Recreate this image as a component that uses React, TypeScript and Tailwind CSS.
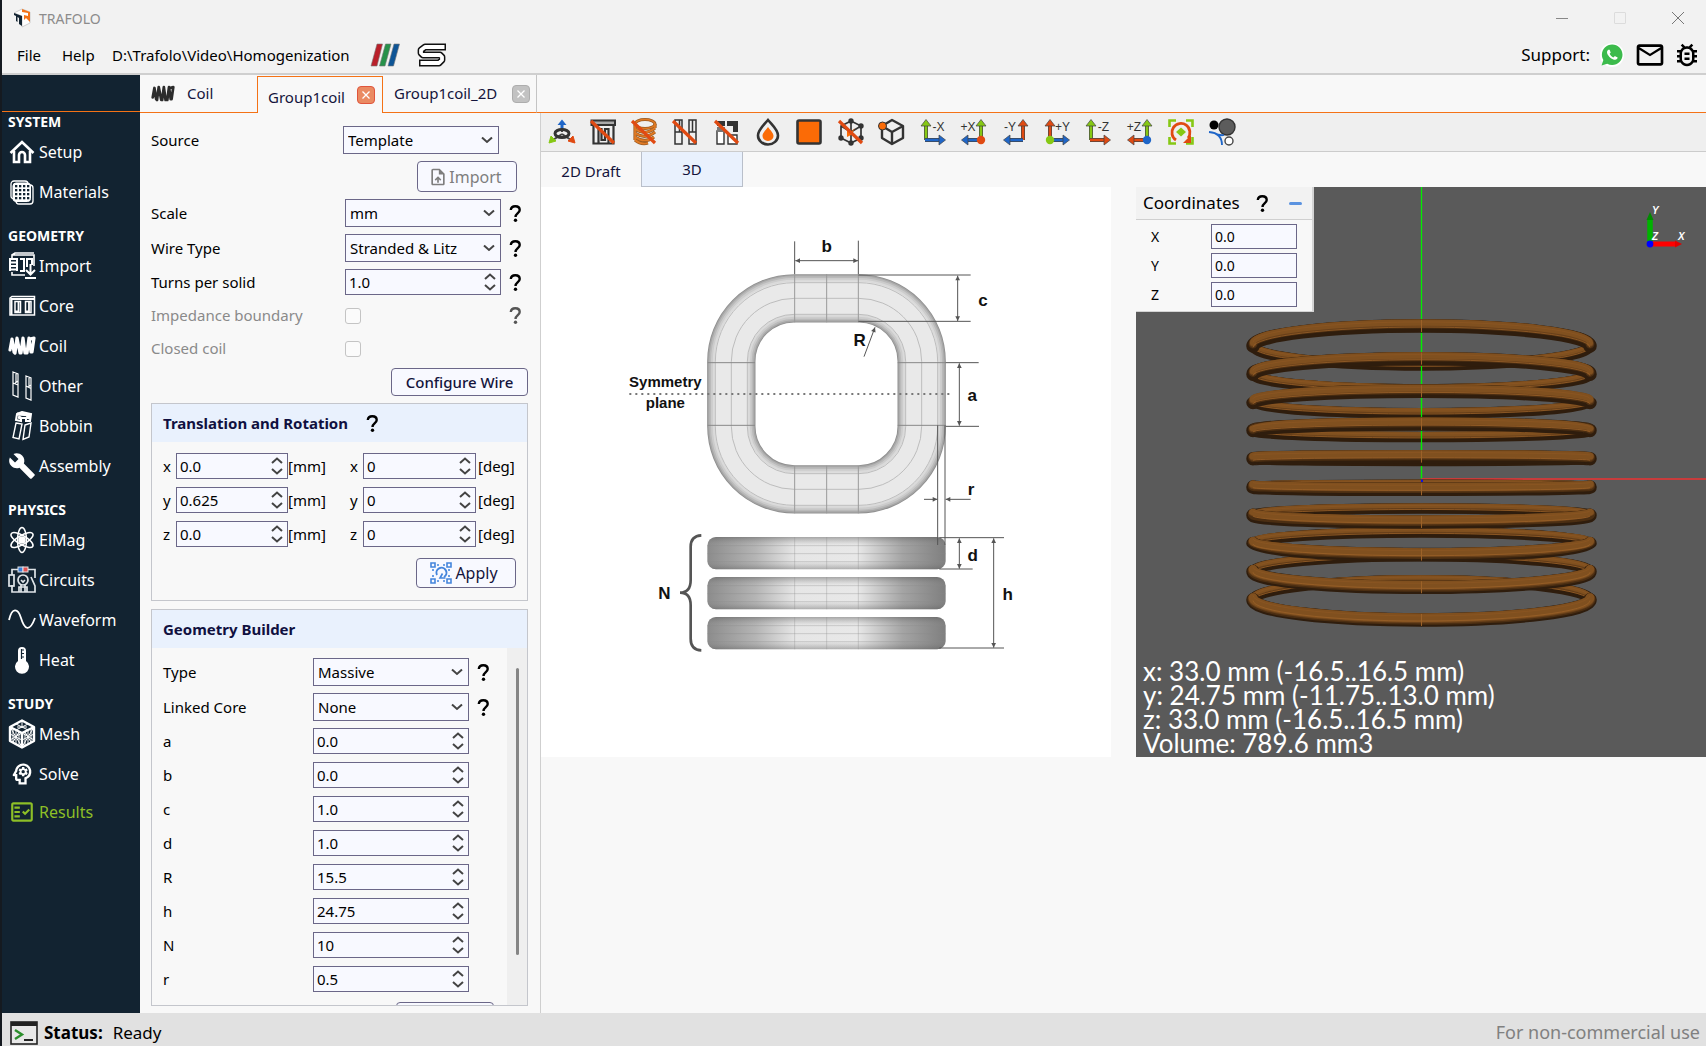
import React from "react";
import {
  MdBuild,
  MdMailOutline,
  MdOutlineBugReport,
  MdOutlineFactCheck,
  MdOutlinePsychology,
  MdOutlineUploadFile,
} from "react-icons/md";
import { IoLogoWhatsapp } from "react-icons/io";

/* ---------- small shared pieces ---------- */

const Chevron = ({ up = false }: { up?: boolean }) => (
  <svg viewBox="0 0 12 7" className="h-[7px] w-3" fill="none" stroke="#444" strokeWidth="2">
    <path d={up ? "M1 6 L6 1.5 L11 6" : "M1 1 L6 5.5 L11 1"} />
  </svg>
);

function Help({ dim = false }: { dim?: boolean }) {
  return (
    <button type="button" aria-label="Help" className={dim ? "flex text-[#555]" : "flex text-black"}>
      <svg viewBox="0 0 21 21" className="size-[21px]" fill="none" stroke="currentColor" strokeWidth="2.4">
        <path d="M5.800 7 C6 4.600 7.800 3.300 10.300 3.300 C13 3.300 14.700 4.900 14.700 7 C14.700 10 10.500 10.200 10.500 14" />
        <circle cx="10.500" cy="17.300" r="1.700" fill="currentColor" stroke="none" />
      </svg>
    </button>
  );
}

function Select({ id, value }: { id: string; value: string }) {
  return (
    <div className="relative h-7 w-[156px] shrink-0">
      <select
        id={id}
        defaultValue={value}
        className="h-full w-full appearance-none border border-[#6b6788] bg-[#f8f9ff] pl-1 text-[15px] text-black outline-none"
      >
        <option>{value}</option>
      </select>
      <span className="pointer-events-none absolute top-1/2 right-[6px] -translate-y-1/2">
        <Chevron />
      </span>
    </div>
  );
}

function Spin({ id, value, className }: { id: string; value: string; className: string }) {
  return (
    <div className={`flex h-[26px] shrink-0 items-center border border-[#6b6788] bg-[#f8f9ff] pr-1 pl-[3px] ${className}`}>
      <input id={id} defaultValue={value} className="w-0 min-w-0 flex-1 bg-transparent text-[15px] text-black outline-none" />
      <span className="flex flex-col gap-1">
        <button type="button" aria-label="Increase"><Chevron up /></button>
        <button type="button" aria-label="Decrease"><Chevron /></button>
      </span>
    </div>
  );
}

/* ---------- sidebar icons ---------- */

const CoilIcon = ({ className }: { className: string }) => (
  <svg viewBox="0 0 28 20" className={className} fill="none" stroke="currentColor" strokeWidth="3.2" strokeLinejoin="round" strokeLinecap="round">
    <path d="M2 14 L4 3 L6 16 L7 17 L9 2 L12 17 L13 17 L15 2 L17 17 L19 17 L21 2 L23 16 L24 16 L26 2 L22 3" />
  </svg>
);

const HomeIcon = () => (
  <svg viewBox="0 0 26 26" className="size-[26px]" fill="none" stroke="#fff" strokeWidth="2.6">
    <path d="M1.5 14 L13 3 L24.5 14" />
    <path d="M5 12 V23 H10 V16 a3 3 0 0 1 6 0 V23 H21 V12" />
  </svg>
);
const MaterialsIcon = () => (
  <svg viewBox="0 0 26 26" className="size-[26px]" fill="none" stroke="#fff">
    <rect x="2" y="2" width="17" height="18" rx="3" strokeWidth="1.3" />
    <rect x="7" y="6" width="17" height="19" rx="3" strokeWidth="1.3" />
    <rect x="4" y="4" width="17.500" height="18.500" rx="3" fill="#fff" />
    <g fill="#122331" stroke="none">
      {[6, 10, 14, 18].map((y) => [6, 10, 14, 18].map((x) => <rect key={`${x}-${y}`} x={x} y={y} width="2.300" height="2.300" />))}
    </g>
  </svg>
);
const ImportIcon = () => (
  <svg viewBox="0 0 28 28" className="size-7" fill="none" stroke="#fff" strokeWidth="1.6">
    <path d="M4 6 V3 L26 3 V14 M4 20 V23 H17 M4 3 L7 1 H26" />
    <path d="M1 7 H10 M1 10.500 H10 M1 14 H10 M1 17.500 H10 M2 6 V19 M9 6 V19" strokeWidth="2" />
    <path d="M12 7 H16 V19 H12 M19 15 V7 H24 V13" strokeWidth="2" />
    <path d="M22.500 12 V22 M18 18 L22.500 22.500 L27 18 M17 26 H28" strokeWidth="2" />
  </svg>
);
const CoreIcon = () => (
  <svg viewBox="0 0 28 22" className="h-[22px] w-7" fill="none" stroke="#fff" strokeWidth="1.5">
    <path d="M2 20 V3 L4 1.500 H26.500 V20 Z" />
    <path d="M3.500 20 V4 H26" strokeWidth="2" />
    <path d="M7 6.500 H12.500 V17.500 H7 Z M17.500 6.500 H23 V17.500 H17.500 Z" />
    <path d="M7 16.500 H10.500 V7 M17.500 16.500 H21 V7" strokeWidth="1.800" />
  </svg>
);
const OtherIcon = () => (
  <svg viewBox="0 0 28 30" className="h-[30px] w-7" fill="none" stroke="#fff" strokeWidth="1.2">
    <path d="M5 1 L10 3 V26 L5 24 Z M5 12 L10 14 M8 3 V12 M7 12 L10 10" />
    <path d="M18 5 L23 7 V29 L18 27 Z M18 15 L23 17.500 M21 7 V16 M20 16 L23 14" />
  </svg>
);
const BobbinIcon = () => (
  <svg viewBox="0 0 28 30" className="h-[30px] w-7" fill="none" stroke="#fff" strokeWidth="1.4">
    <path d="M8 12 L14 13 L11 28 L5 26.500 Z M17 14 L23 12 L21 26 L15 28.500 Z" />
    <path d="M9 3 L14 1 L23 3 L22 10 L18 10 V7 H13 V10 L8 9 Z" strokeWidth="2" />
    <path d="M9 3 L23 4 M10 6 L13 7 M18 6 L22 7" strokeWidth="3" />
  </svg>
);
const AtomIcon = () => (
  <svg viewBox="0 0 28 28" className="size-7" fill="none" stroke="#fff" strokeWidth="1.5">
    {[0, 60, 120].map((a) => <ellipse key={a} cx="14" cy="14" rx="4.500" ry="12.500" transform={`rotate(${a} 14 14)`} />)}
    <circle cx="14" cy="14" r="3" fill="#fff" />
  </svg>
);
const CircuitIcon = () => (
  <svg viewBox="0 0 28 28" className="size-7" fill="none" stroke="#dfe4e8" strokeWidth="1.7">
    <path d="M11 3.500 H4 V9 M4 19 V26 H27 V20 L23 11 M27 12 V3.500 H20" />
    <rect x="1" y="9" width="5" height="11" />
    <circle cx="15" cy="14" r="5" />
    <path d="M13 18 V26 M17 18 V26 M13 14 L15 16 L17 14 M11 26 V21 H19 V26" />
    <rect x="10" y="1" width="5" height="5" fill="#3d7fd6" strokeWidth="1" />
    <rect x="15" y="1" width="5" height="5" fill="#e25252" strokeWidth="1" />
  </svg>
);
const WaveIcon = () => (
  <svg viewBox="0 0 28 24" className="h-6 w-7" fill="none" stroke="#fff" strokeWidth="1.8">
    <path d="M1 12 C4 -1 10 0 13 10 S21 26 27 10" />
  </svg>
);
const HeatIcon = () => (
  <svg viewBox="0 0 28 28" className="size-7" fill="#fff">
    <path d="M10 5 a4 4 0 0 1 8 0 V15 a7 7 0 1 1 -8 0 Z" />
    <path d="M14 4 H16 M14 7.500 H16 M14 11 H16 M13.500 3 V13" stroke="#122331" strokeWidth="1.2" />
  </svg>
);
const MeshIcon = () => (
  <svg viewBox="0 0 28 30" className="h-[30px] w-7" fill="none" stroke="#fff" strokeWidth="2.4" strokeLinejoin="round">
    <path d="M14 1.500 L26 8 V22 L14 28.500 L2 22 V8 Z M2 8 L14 14 L26 8 M14 14 V28.500" />
    <path d="M8 5 L20 11 M20 5 L8 11 M14 2 V9 M9 8 H19 M2 15 L14 21 M8 11 V25 M2 8 L14 28 M2 21 L14 14 M5 10 L5 23 L11 13 V26 M26 15 L14 21 M20 11 V25 M26 8 L14 28 M26 21 L14 14 M23 10 V23 L17 13 V26" strokeWidth="1" />
  </svg>
);

type Item = { label: string; icon: React.ReactNode; active?: boolean };
const nav: { title: string; items: Item[] }[] = [
  { title: "SYSTEM", items: [{ label: "Setup", icon: <HomeIcon /> }, { label: "Materials", icon: <MaterialsIcon /> }] },
  {
    title: "GEOMETRY",
    items: [
      { label: "Import", icon: <ImportIcon /> },
      { label: "Core", icon: <CoreIcon /> },
      { label: "Coil", icon: <CoilIcon className="h-5 w-7" /> },
      { label: "Other", icon: <OtherIcon /> },
      { label: "Bobbin", icon: <BobbinIcon /> },
      { label: "Assembly", icon: <MdBuild className="size-7" /> },
    ],
  },
  {
    title: "PHYSICS",
    items: [
      { label: "ElMag", icon: <AtomIcon /> },
      { label: "Circuits", icon: <CircuitIcon /> },
      { label: "Waveform", icon: <WaveIcon /> },
      { label: "Heat", icon: <HeatIcon /> },
    ],
  },
  {
    title: "STUDY",
    items: [
      { label: "Mesh", icon: <MeshIcon /> },
      { label: "Solve", icon: <MdOutlinePsychology className="size-[30px]" /> },
      { label: "Results", icon: <MdOutlineFactCheck className="size-[26px]" />, active: true },
    ],
  },
];

function Sidebar() {
  return (
    <nav className="w-[138px] shrink-0 bg-[#122331] text-white">
      <div className="h-[37px] border-b border-[#f47216]" />
      <div className="flex flex-col gap-[14px]">
        {nav.map((s) => (
          <section key={s.title}>
            <h2 className="h-5 pl-[6px] text-[14px] leading-5 font-bold">{s.title}</h2>
            {s.items.map((i) => (
              <a
                key={i.label}
                href="#"
                className={`flex items-center gap-[3px] pl-[6px] text-[16px] ${i.active ? "h-9 text-[#8dbf27]" : "h-10 text-white"}`}
              >
                <span className="flex w-7 justify-center">{i.icon}</span>
                {i.label}
              </a>
            ))}
          </section>
        ))}
      </div>
    </nav>
  );
}

/* ---------- header ---------- */

function Header() {
  return (
    <header className="border-b-2 border-[#cfcfcf] bg-[#f2f2f2]">
      <div className="flex h-9 items-center pl-[11px]">
        <svg viewBox="0 0 18 20" className="h-5 w-[18px]" fill="none">
          <path d="M1 5 L9 1 L17 4 V15 L9 19 V8 Z" fill="#fff" stroke="#bbb" strokeWidth="0.7" />
          <path d="M9 1 L17 4 V14 L15 12 L13 10 L11 12 V7 L15 8 V5 L9 4 Z" fill="#f47216" />
          <path d="M1 5 L9 8 V18 L6 16 V10 L4.500 9 V14 L3 13 V8 L1 7 Z" fill="#122331" />
        </svg>
        <h1 className="ml-2 text-[14px] text-[#8c8c8c]">TRAFOLO</h1>
        <div className="ml-auto flex items-center gap-[46px] pr-[22px]">
          <button type="button" aria-label="Minimize" className="flex h-3 w-3 items-center"><span className="h-px w-3 bg-[#888]" /></button>
          <button type="button" aria-label="Maximize" className="size-3 rounded-[1px] border border-[#dcdcdc]" />
          <button type="button" aria-label="Close">
            <svg viewBox="0 0 12 12" className="size-3" stroke="#777" strokeWidth="1"><path d="M0 0 L12 12 M12 0 L0 12" /></svg>
          </button>
        </div>
      </div>
      <div className="flex h-[37px] items-center pt-px pl-[15px] text-[15px] text-black">
        <button type="button" className="w-[45px] text-left">File</button>
        <button type="button" className="w-[50px] text-left">Help</button>
        <span>D:\Trafolo\Video\Homogenization</span>
        <svg viewBox="0 0 30 24" className="ml-5 h-6 w-[30px]">
          <path d="M7 1 H12.500 L7 23 H1 Z" fill="#b9202a" stroke="#777" strokeWidth="0.6" />
          <path d="M15.500 1 H21 L15 23 H9.500 Z" fill="#27914a" stroke="#777" strokeWidth="0.6" />
          <path d="M24 1 H29.500 L23.500 23 H18 Z" fill="#0e5596" stroke="#777" strokeWidth="0.6" />
        </svg>
        <svg viewBox="0 0 30 24" className="ml-[17px] h-6 w-[30px]" fill="none" strokeLinejoin="round">
          <path d="M29 4 H8 L4 7 V10 L6 12 H23 L25 14 V17 L22 20 H2" stroke="#111" strokeWidth="6.8" />
          <path d="M27.500 4 H8 L4 7 V10 L6 12 H23 L25 14 V17 L22 20 H3.500" stroke="#fff" strokeWidth="3.8" />
        </svg>
        <div className="ml-auto flex items-center pr-1">
          <span className="mr-[10px] text-[17px]">Support:</span>
          <a href="#" aria-label="WhatsApp" className="mr-[10px] rounded-full bg-white text-[#3cbb4c]"><IoLogoWhatsapp className="size-6" /></a>
          <a href="#" aria-label="E-mail" className="mr-[6px]"><MdMailOutline className="size-8" /></a>
          <a href="#" aria-label="Report a bug"><MdOutlineBugReport className="size-[30px]" /></a>
        </div>
      </div>
    </header>
  );
}

function CloseBox({ hot = false }: { hot?: boolean }) {
  return (
    <button
      type="button"
      aria-label="Close tab"
      className={`flex size-[18px] items-center justify-center rounded-sm border ${hot ? "border-[#e0553c] bg-[#ea8a62]" : "border-[#adadad] bg-[#c2c2c2]"}`}
    >
      <svg viewBox="0 0 8 8" className="size-2" stroke="#fff" strokeWidth="1.3"><path d="M0.500 0.500 L7.500 7.500 M7.500 0.500 L0.500 7.500" /></svg>
    </button>
  );
}

function TopTabs() {
  return (
    <div role="tablist" className="flex h-[38px] shrink-0 text-[15px] text-[#14143c]">
      <div role="tab" className="flex w-[117px] items-center gap-3 border-b border-[#f47216] pl-[11px]">
        <CoilIcon className="h-[18px] w-6 text-[#2c2c2c]" />
        Coil
      </div>
      <div role="tab" aria-selected="true" className="mt-px flex w-[126px] items-center justify-between border border-b-0 border-[#f47216] pr-[7px] pl-[10px]">
        <span className="pt-1">Group1coil</span>
        <CloseBox hot />
      </div>
      <div role="tab" className="flex w-[154px] items-center justify-between border-r border-b border-r-[#c4c4c4] border-b-[#f47216] pr-[6px] pl-[11px]">
        Group1coil_2D
        <CloseBox />
      </div>
      <div className="flex-1 border-b border-[#f47216]" />
    </div>
  );
}

/* ---------- left form ---------- */

function Row({ id, label, children }: { id: string; label: string; children: React.ReactNode }) {
  return (
    <div className="flex items-center text-black">
      <label htmlFor={id} className="flex-1">{label}</label>
      {children}
    </div>
  );
}

const builder = [["a", "0.0"], ["b", "0.0"], ["c", "1.0"], ["d", "1.0"], ["R", "15.5"], ["h", "24.75"], ["N", "10"], ["r", "0.5"]];
const moves = [["x", "0.0"], ["y", "0.625"], ["z", "0.0"]];

const ApplyIcon = () => (
  <svg viewBox="0 0 22 22" className="size-[22px]" fill="none" stroke="#4485dc" strokeWidth="1.6">
    <path d="M1 1 H5 V5 H1 Z M17 1 H21 V5 H17 Z M1 17 H5 V21 H1 Z M17 17 H21 V21 H17 Z" />
    <path d="M7 3 H9 M13 3 H15 M7 19 H9 M13 19 H15 M3 7 V9 M3 13 V15 M19 7 V9 M19 13 V15" />
    <path d="M7 13 A5 5 0 1 1 14 15" strokeWidth="2" />
    <path d="M15.500 16 H10 L12.500 11.500" strokeWidth="1.600" />
  </svg>
);

function FormPanel() {
  return (
    <div className="flex w-[401px] shrink-0 flex-col border-r border-[#cfcfcf] pt-[13px] pr-3 pb-[7px] pl-[11px] text-[15px]">
      <div className="flex flex-col pr-[2px]">
        <div className="pr-[27px]"><Row id="source" label="Source"><Select id="source" value="Template" /></Row></div>
        <div className="mt-[7px] flex justify-end pr-[9px]">
          <button type="button" disabled className="flex h-[31px] w-[100px] items-center justify-center rounded-[4px] border border-[#6b6788] bg-[#f8f9ff] pr-1 text-[16px] text-[#7e7e7e]">
            <MdOutlineUploadFile className="mr-px size-5" />Import
          </button>
        </div>
        <div className="mt-[7px] flex flex-col gap-[7px]">
          <Row id="scale" label="Scale"><Select id="scale" value="mm" /><span className="ml-1"><Help /></span></Row>
          <Row id="wire" label="Wire Type"><Select id="wire" value="Stranded & Litz" /><span className="ml-1"><Help /></span></Row>
          <Row id="turns" label="Turns per solid"><Spin id="turns" value="1.0" className="w-[156px]" /><span className="ml-1"><Help /></span></Row>
        </div>
        <div className="mt-1 flex flex-col text-[#8a8a8a]">
          <div className="flex h-[33px] items-center">
            <label htmlFor="imp" className="flex-1">Impedance boundary</label>
            <input id="imp" type="checkbox" disabled className="mr-[140px] size-4 appearance-none rounded-[3px] border border-[#c4c4c4] bg-[#fbfbfb]" />
            <span className="ml-1"><Help dim /></span>
          </div>
          <div className="flex h-[33px] items-center">
            <label htmlFor="closed" className="flex-1">Closed coil</label>
            <input id="closed" type="checkbox" disabled className="mr-[165px] size-4 appearance-none rounded-[3px] border border-[#c4c4c4] bg-[#fbfbfb]" />
          </div>
        </div>
      </div>
      <button type="button" className="mt-[3px] h-7 w-[137px] shrink-0 self-end rounded-[4px] border border-[#6b6788] bg-[#f8f9ff] text-[15px] font-medium text-[#14143c]">
        Configure Wire
      </button>

      <section className="mt-[7px] shrink-0 border border-[#c4c6cc]">
        <div className="flex h-[38px] items-center gap-[14px] bg-[#e9f1fd] px-[11px]">
          <h2 className="text-[15px] font-bold text-[#101040]">Translation and Rotation</h2>
          <Help />
        </div>
        <div className="flex flex-col gap-2 px-[11px] pt-[11px]">
          {moves.map(([k, v]) => (
            <div key={k} className="flex items-center">
              <label htmlFor={`t-${k}`} className="w-[13px]">{k}</label>
              <Spin id={`t-${k}`} value={v} className="w-[112px]" />
              <span className="w-[62px]">[mm]</span>
              <label htmlFor={`r-${k}`} className="w-[13px]">{k}</label>
              <Spin id={`r-${k}`} value="0" className="w-[113px]" />
              <span className="ml-[2px]">[deg]</span>
            </div>
          ))}
        </div>
        <div className="flex justify-end pt-[11px] pr-[11px] pb-3">
          <button type="button" className="flex h-[30px] w-[100px] items-center justify-center gap-[3px] rounded-[4px] border border-[#6b6788] bg-[#f8f9ff] pr-1 text-[16px] text-[#14143c]">
            <ApplyIcon />Apply
          </button>
        </div>
      </section>

      <section className="mt-2 flex min-h-0 flex-1 flex-col border border-[#c4c6cc]">
        <h2 className="h-[38px] shrink-0 bg-[#e9f1fd] px-[11px] text-[15px] leading-[39px] font-bold text-[#101040]">Geometry Builder</h2>
        <div className="flex min-h-0 flex-1">
          <div className="flex min-w-0 flex-1 flex-col gap-[7px] overflow-hidden pt-[10px] pr-[13px] pl-[11px]">
            <Row id="type" label="Type"><Select id="type" value="Massive" /><span className="ml-1"><Help /></span></Row>
            <Row id="linked" label="Linked Core"><Select id="linked" value="None" /><span className="ml-1"><Help /></span></Row>
            <div className="flex shrink-0 flex-col gap-2 pr-[25px]">
              {builder.map(([k, v]) => (
                <Row key={k} id={`g-${k}`} label={k}><Spin id={`g-${k}`} value={v} className="w-[156px]" /></Row>
              ))}
            </div>
            <button type="button" aria-label="Build" className="mt-[3px] h-7 w-[98px] shrink-0 self-end rounded-[4px] border border-[#6b6788] bg-[#f8f9ff]" />
          </div>
          <div className="flex w-5 shrink-0 justify-center bg-[#efefef] pt-5 pb-[50px]">
            <div className="w-[3px] rounded-full bg-[#858585]" />
          </div>
        </div>
      </section>
    </div>
  );
}

/* ---------- toolbar ---------- */

const G = "#86c814";
const B = "#1f66c8";
const R = "#e04a12";
const D = "#333333";

function Tool({ name, children }: { name: string; children: React.ReactNode }) {
  return (
    <button type="button" aria-label={name} className="flex">
      <svg viewBox="0 0 28 28" className="size-7" fill="none">{children}</svg>
    </button>
  );
}
const Slash = () => <path d="M2 3 L25 25" stroke={R} strokeWidth="3.2" />;

function AxisTool({ label, up, side, left = false, dot }: { label: string; up: string; side: string; left?: boolean; dot?: string }) {
  const x = left ? 21 : 7;
  return (
    <Tool name={`View ${label}`}>
      <path d={`M${x} 22 V6`} stroke="#444" strokeWidth="4" />
      <path d={`M${x} 22 V6`} stroke={up} strokeWidth="2.6" />
      <path d={`M${x - 5} 8 L${x} 1.500 L${x + 5} 8 Z`} fill={up} stroke="#444" strokeWidth="0.7" />
      <path d={left ? "M21 22 H5" : "M6 22 H22"} stroke="#444" strokeWidth="4" />
      <path d={left ? "M21 22 H5" : "M6 22 H22"} stroke={side} strokeWidth="2.6" />
      <path d={left ? "M8 17 L1.500 22 L8 27 Z" : "M20 17 L26.500 22 L20 27 Z"} fill={side} stroke="#444" strokeWidth="0.7" />
      {dot && <circle cx={x} cy="22" r="4.200" fill={dot} />}
      <text x={left ? 8 : 19.500} y="13" textAnchor="middle" fontSize="12" fontFamily="Liberation Sans, sans-serif" fill="#333">{label}</text>
    </Tool>
  );
}

function Toolbar() {
  return (
    <div className="h-[39px] border-b border-[#cccccc] bg-[#efefef]">
      <div className="flex h-full w-[702px] items-center justify-around">
        <Tool name="Origin">
          <path d="M14 14 V6 M14 16 L5 22 M14 16 L23 22" stroke="#444" strokeWidth="2" />
          <path d="M9.500 7 L14 1.500 L18.500 7 Z M12.500 6 H15.500 V11 H12.500 Z" fill={B} />
          <path d="M1 25 L3 18 L8 23 Z" fill={G} stroke={G} />
          <path d="M27 25 L25 18 L20 23 Z" fill={R} stroke={R} />
          <ellipse cx="14" cy="15.500" rx="7" ry="4" stroke={D} strokeWidth="3" />
        </Tool>
        <Tool name="Hide core">
          <path d="M2.500 2.500 H26 V7 H2.500 Z" stroke={D} strokeWidth="2" fill="#aaa" />
          <path d="M4.500 7 V25.500 H24.500 V7 M9.500 25 V11 H12.500 V22 H16 V11 H19.500 V25" stroke={D} strokeWidth="2.200" />
          <Slash />
        </Tool>
        <Tool name="Hide coil">
          <ellipse cx="15" cy="6" rx="10" ry="4.500" stroke="#9a5a22" strokeWidth="3" />
          <path d="M5 7 V22 M5 11 Q15 18 25 10 M5 15 Q15 22 25 14 M5 19 Q15 26 24 19 M5 22 Q11 27 18 25 M25 6 V10" stroke="#9a5a22" strokeWidth="3.200" />
          <ellipse cx="15" cy="6" rx="10" ry="4.500" stroke="#e07a24" strokeWidth="1.500" />
          <path d="M5 7 V22 M5 11 Q15 18 25 10 M5 15 Q15 22 25 14 M5 19 Q15 26 24 19 M5 22 Q11 27 18 25 M25 6 V10" stroke="#e07a24" strokeWidth="1.700" />
          <Slash />
        </Tool>
        <Tool name="Hide other">
          <path d="M4 2 H11 V26 H4 Z M4 14 H11 M8.500 2 V14 M18 2 H25 V26 H18 Z M18 14 H25 M21.500 2 V14" stroke={D} strokeWidth="1.500" />
          <Slash />
        </Tool>
        <Tool name="Hide bobbin">
          <path d="M4 3 H12 V8 H4 Z M14 3 H25 V14 H20 V8 H14 Z" fill={D} />
          <path d="M4 13 H11 V26 H4 Z M15 17 H24 V26 H15 Z" stroke={D} strokeWidth="1.400" fill="#fff" />
          <path d="M4 9 H12 V14 H4 Z" fill="#777" />
          <Slash />
        </Tool>
        <Tool name="Drop">
          <path d="M14 2 C9 8 4 12 4 17.500 A10 9 0 0 0 24 17.500 C24 12 19 8 14 2 Z" stroke={D} strokeWidth="2.600" />
          <path d="M14 9 C11 13 8.500 15 8.500 18 A5.500 5 0 0 0 19.500 18 C19.500 15 17 13 14 9 Z" fill="#fb6b06" />
        </Tool>
        <Tool name="Surface"><rect x="2.500" y="2.500" width="23" height="23" rx="1.500" fill="#fb6b06" stroke={D} strokeWidth="2.600" /></Tool>
        <Tool name="Hide nodes">
          <path d="M14 3 L24 8 V20 L14 25 L4 20 V8 Z M4 8 L14 14 L24 8 M14 3 V25" stroke={D} strokeWidth="1.700" />
          <g fill={D}><circle cx="14" cy="3" r="2.700" /><circle cx="24" cy="8" r="2.700" /><circle cx="24" cy="20" r="2.700" /><circle cx="14" cy="25" r="2.700" /><circle cx="4" cy="20" r="2.700" /></g>
          <path d="M10 10 L14 14 L18 10 L14 17 L10 19 Z" fill="#fb6b06" />
          <Slash />
        </Tool>
        <Tool name="Pick point">
          <path d="M14 2 L25 8 V20 L14 26 L4 20 V8 Z M4 8 L14 14 L25 8 M14 14 V26" stroke={D} strokeWidth="2.400" strokeLinejoin="round" />
          <circle cx="4.500" cy="8" r="4" fill="#fb6b06" stroke={D} />
        </Tool>
        <AxisTool label="-X" up={G} side={B} />
        <AxisTool label="+X" up={G} side={B} left dot={R} />
        <AxisTool label="-Y" up={R} side={B} left />
        <AxisTool label="+Y" up={R} side={B} dot={G} />
        <AxisTool label="-Z" up={G} side={R} />
        <AxisTool label="+Z" up={G} side={R} left dot={B} />
        <Tool name="Fit view">
          <path d="M9 2.500 H2.500 V9 M19 2.500 H25.500 V9 M9 25.500 H2.500 V19 M19 25.500 H25.500 V19" stroke={G} strokeWidth="2.600" />
          <path d="M9 22 A9 9 0 1 1 21 20" stroke={R} strokeWidth="2.800" />
          <path d="M24 17 V25 H16 Z" fill={R} />
          <path d="M14 9.500 L19 14 L14 18.500 L9 14 Z" fill={G} />
        </Tool>
        <Tool name="Contacts">
          <circle cx="6" cy="7" r="4.500" fill="#000" />
          <circle cx="19" cy="9" r="8" fill="#5c5c5c" stroke="#333" strokeWidth="1.400" />
          <circle cx="21" cy="23" r="4" fill="#fff" stroke="#444" strokeWidth="1.400" />
          <path d="M1 14 Q14 15 14 27 M6 15 Q12 18 16 17" stroke={B} strokeWidth="1.800" />
        </Tool>
      </div>
    </div>
  );
}

/* ---------- parametric drawing ---------- */

function CoilDrawing() {
  const body = { x: 394, y: 235, width: 571, height: 573, rx: 189, fill: "none" };
  const layers: [string, number][] = [["#8f8f8f", 145], ["#a6a6a6", 140], ["#bababa", 132], ["#cccccc", 122], ["#dadada", 111], ["#e9e9e9", 99]];
  return (
    <svg viewBox="-177 -99 1710 1710" className="block w-full" role="img" aria-label="Coil dimensions">
      <defs>
        <linearGradient id="bar" x1="0" x2="1">
          <stop offset="0" stopColor="#8c8c8c" />
          <stop offset="0.200" stopColor="#b4b4b4" />
          <stop offset="0.370" stopColor="#e6e6e6" />
          <stop offset="0.630" stopColor="#e8e8e8" />
          <stop offset="0.820" stopColor="#a4a4a4" />
          <stop offset="1" stopColor="#7f7f7f" />
        </linearGradient>
        <linearGradient id="edge" x1="0" x2="0" y1="0" y2="1">
          <stop offset="0" stopColor="#555" stopOpacity="0.450" />
          <stop offset="0.250" stopColor="#888" stopOpacity="0" />
          <stop offset="0.750" stopColor="#888" stopOpacity="0" />
          <stop offset="1" stopColor="#555" stopOpacity="0.400" />
        </linearGradient>
        <marker id="arr" viewBox="0 0 10 10" refX="10" refY="5" markerWidth="18" markerHeight="14" markerUnits="userSpaceOnUse" orient="auto-start-reverse">
          <path d="M0 0 L10 5 L0 10 Z" fill="#555" />
        </marker>
      </defs>
      {layers.map(([c, w]) => <rect key={w} {...body} stroke={c} strokeWidth={w} />)}
      <g fill="none" stroke="#bdbdbd" strokeWidth="3">
        <rect {...body} />
        <rect x="346" y="188" width="667" height="668" rx="237" />
        <rect x="442" y="283" width="475" height="478" rx="141" />
        <path d="M584 162 V307 M680 162 V307 M775 162 V307 M584 737 V880 M680 737 V880 M775 737 V880" stroke="#999" />
        <path d="M323 428 H465 M323 616 H465 M893 428 H1037 M893 616 H1037" stroke="#888" />
      </g>
      {[951, 1071, 1191].map((y) => (
        <g key={y}>
          <rect x="322" y={y} width="715" height="97" rx="26" fill="url(#bar)" />
          <rect x="322" y={y} width="715" height="97" rx="26" fill="url(#edge)" />
          <path d={`M322 ${y + 26} H1037 M322 ${y + 50} H1037 M322 ${y + 74} H1037 M584 ${y} v97 M680 ${y} v97 M775 ${y} v97`} stroke="#8a8a8a" strokeOpacity="0.500" strokeWidth="2" />
        </g>
      ))}
      <path d="M88 522 H1055" stroke="#777" strokeWidth="6" strokeDasharray="6 12" />
      <g stroke="#555" strokeWidth="3" fill="none">
        <path d="M584 64 V162 M775 62 V162 M775 165 H1112 M775 304 H1112 M1037 428 H1136 M1037 619 H1137 M1013 616 V975 M1035 616 V975 M1018 953 H1212 M1018 1047 H1118 M1018 1284 H1212" />
        <g markerStart="url(#arr)" markerEnd="url(#arr)">
          <path d="M586 122 H774" />
          <path d="M1073 167 V303" />
          <path d="M1078 430 V617" />
          <path d="M1078 955 V1046" />
          <path d="M1181 955 V1283" />
        </g>
        <path d="M792 410 L825 322" markerEnd="url(#arr)" />
        <path d="M972 838 H1012" markerEnd="url(#arr)" />
        <path d="M1112 838 H1037" markerEnd="url(#arr)" />
        <path d="M304 946 Q272 948 272 980 V1080 Q272 1118 240 1118 Q272 1118 272 1156 V1256 Q272 1290 304 1291" strokeWidth="8" />
      </g>
      <g fontFamily="Liberation Sans, sans-serif" fontWeight="700" fontSize="51" textAnchor="middle" fill="#111">
        <text x="680" y="97">b</text>
        <text x="1149" y="259">c</text>
        <text x="779" y="378">R</text>
        <text x="1117" y="544">a</text>
        <text x="1113" y="824">r</text>
        <text x="1118" y="1022">d</text>
        <text x="1223" y="1139">h</text>
        <text x="193" y="1138">N</text>
        <text x="196" y="502" fontSize="45">Symmetry</text>
        <text x="196" y="564" fontSize="45">plane</text>
      </g>
    </svg>
  );
}

/* ---------- 3D view ---------- */

const tube = (side: number, mid: number) =>
  `M1253 ${side} A168.500 ${Math.max(Math.abs(mid - side), 0.5)} 0 0 ${mid < side ? 1 : 0} 1590 ${side}`;

/* lit: share of the tube's upper face that catches the light */
function Tube({ d, w, lit }: { d: string; w: number; lit: number }) {
  const shift = (share: number) => `translate(0 ${-w * (0.48 - share / 2)})`;
  return (
    <g fill="none" strokeLinecap="round">
      <path d={d} stroke="#2f1d0d" strokeWidth={w} />
      <path d={d} stroke="#4b2e12" strokeWidth={w * (lit + 0.2)} transform={shift(lit + 0.2)} />
      <path d={d} stroke="#68401a" strokeWidth={w * (lit + 0.08)} transform={shift(lit + 0.08)} />
      <path d={d} stroke="#80501f" strokeWidth={w * lit} transform={shift(lit)} />
      <path d={d} stroke="#9a6128" strokeWidth="0.8" transform={`translate(0 ${w * 0.08})`} />
      <path d={d} stroke="#8f5824" strokeWidth="0.6" transform={`translate(0 ${-w * 0.3})`} />
    </g>
  );
}

function Scene() {
  const rings = Array.from({ length: 10 }, (_, k) => ({
    side: 346 + 28.2 * k,
    near: 326 + 32.66 * k,
    back: 365.4 + 23.87 * k,
    lit: 0.46 + 0.02 * k,
  }));
  return (
    <svg viewBox="1136 187 570 570" className="block w-full bg-[#5a5a5a]" role="img" aria-label="3D coil">
      <path d="M1421.500 187 V480" stroke="#00f000" strokeWidth="1.200" />
      <path d="M1421.500 479 H1706" stroke="#c83c3c" strokeWidth="1.800" />
      {rings.map((r) => <Tube key={r.side} d={tube(r.side, r.back)} w={10.5} lit={0.42} />)}
      {rings.map((r) => <Tube key={r.side} d={tube(r.side, r.near)} w={13.5} lit={r.lit} />)}
      <path d="M1421.500 333 V352 M1421.500 366 V384 M1421.500 398 V417 M1421.500 431 V450 M1421.500 466 V478" stroke="#00f000" strokeWidth="1.200" />
      {rings.map((r) => <path key={r.side} d={`M1421.500 ${r.near - 6} v12`} stroke="#9c6228" strokeWidth="1" />)}
      <path d="M1421 479.500 H1423 V482 H1421 Z" fill="#1010e0" />
      <path d="M1650 244 V219" stroke="#00b400" strokeWidth="5.500" />
      <path d="M1646.500 220 L1650 212 L1653.500 220 Z" fill="#008c00" />
      <path d="M1650 244 H1676" stroke="#f00" strokeWidth="5" />
      <path d="M1675 240.500 L1682 244 L1675 247.500 Z" fill="#e00000" />
      <circle cx="1650" cy="244" r="3.400" fill="#00f" />
      <g fontFamily="Liberation Sans, sans-serif" fontStyle="italic" fontWeight="700" fontSize="10" fill="#fff">
        <text x="1652" y="214">Y</text>
        <text x="1652" y="240">Z</text>
        <text x="1678" y="240">X</text>
      </g>
    </svg>
  );
}

function View3D() {
  return (
    <div className="relative min-w-0 flex-1">
      <Scene />
      <div className="absolute top-0 left-0 w-[178px] border-r-2 border-b border-[#d4d4d4] bg-[#f8f8f8]">
        <div className="flex h-[33px] items-center border-b border-[#cfcfcf] bg-[#f2f2f2] pl-[7px]">
          <h2 className="w-[109px] text-[17px] text-black">Coordinates</h2>
          <Help />
          <button type="button" aria-label="Collapse" className="ml-4 h-[3px] w-[13px] rounded-full bg-[#5b93e0]" />
        </div>
        <div className="flex flex-col gap-1 py-1 pr-[15px] pl-[15px] text-[14px] text-black">
          {["X", "Y", "Z"].map((k) => (
            <div key={k} className="flex items-center justify-between">
              <label htmlFor={`c-${k}`}>{k}</label>
              <input id={`c-${k}`} defaultValue="0.0" className="h-[25px] w-[86px] border border-[#6b6788] bg-[#f8f9ff] pl-[3px] outline-none" />
            </div>
          ))}
        </div>
      </div>
      <div className="absolute bottom-[2px] left-[7px] font-[Lato] text-[26px] leading-6 whitespace-nowrap text-white">
        <p>x: 33.0 mm (-16.5..16.5 mm)</p>
        <p>y: 24.75 mm (-11.75..13.0 mm)</p>
        <p>z: 33.0 mm (-16.5..16.5 mm)</p>
        <p>Volume: 789.6 mm3</p>
      </div>
    </div>
  );
}

export default function App() {
  return (
    <div className="flex h-screen flex-col overflow-hidden border-l-2 border-[#151a20] bg-[#f8f8f8] font-['Noto_Sans',sans-serif]">
      <Header />
      <div className="flex min-h-0 flex-1">
        <Sidebar />
        <div className="flex min-w-0 flex-1 flex-col">
          <TopTabs />
          <div className="flex min-h-0 flex-1">
            <FormPanel />
            <main className="min-w-0 flex-1">
              <Toolbar />
              <div role="tablist" className="flex h-[35px] text-[15px] text-[#14143c]">
                <button type="button" role="tab" className="w-[100px] pt-[3px]">2D Draft</button>
                <button type="button" role="tab" aria-selected="true" className="w-[102px] border border-t-0 border-[#b9bfca] bg-[#e9f1fd]">3D</button>
              </div>
              <div className="flex gap-[25px]">
                <div className="min-w-0 flex-1 bg-white"><CoilDrawing /></div>
                <View3D />
              </div>
            </main>
          </div>
        </div>
      </div>
      <footer className="flex h-[33px] shrink-0 items-center bg-[#e1e1e1] pt-[6px] pr-[6px] pl-2 text-[17px] text-black">
        <svg viewBox="0 0 28 24" className="mr-[6px] h-6 w-7" fill="none">
          <rect x="1" y="1" width="26" height="22" fill="#e8e8e8" stroke="#222" strokeWidth="1.600" />
          <path d="M1 3 H27" stroke="#222" strokeWidth="4" />
          <path d="M5 9 L12 13.500 L5 18" stroke="#2c8f2c" strokeWidth="2.400" />
          <path d="M14 19 H23" stroke="#222" strokeWidth="2" />
        </svg>
        <span className="font-bold">Status:</span>
        <span className="ml-[10px]">Ready</span>
        <span className="ml-auto text-[18px] text-[#808080]">For non-commercial use</span>
      </footer>
    </div>
  );
}
